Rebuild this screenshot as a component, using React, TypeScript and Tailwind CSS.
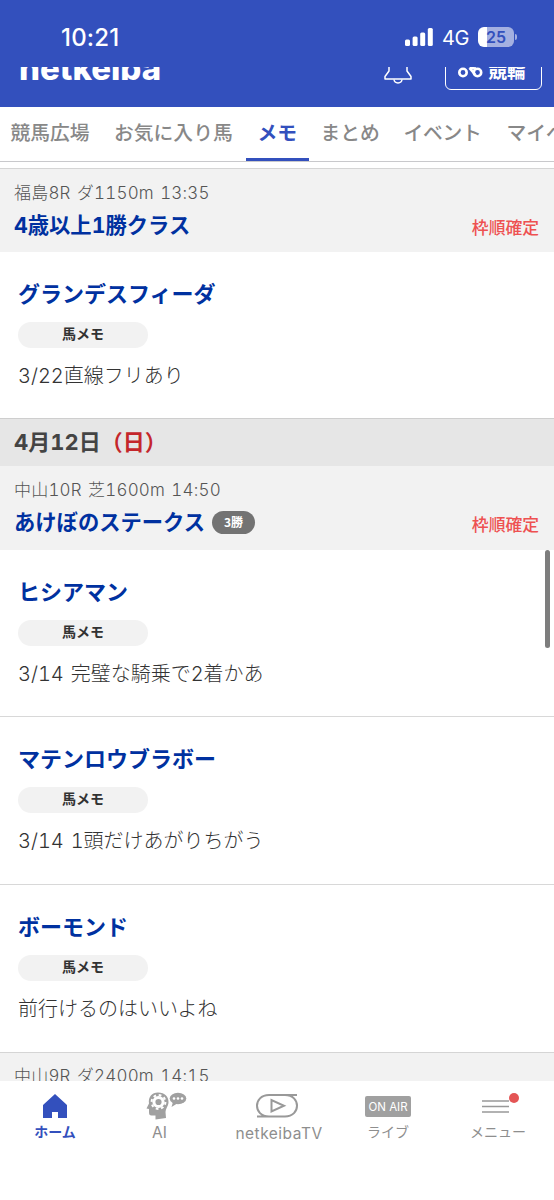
import { ReactNode } from 'react';
import clsx from 'clsx';

interface Horse {
  name: string;
  memo: string;
}

interface HorseMemoProps extends Horse {
  className?: string;
}

interface RaceHeaderProps {
  info: string;
  title: string;
  grade?: string;
  className?: string;
}

interface NavItemProps {
  label: string;
  icon: ReactNode;
  className: string;
  labelSize?: string;
  active?: boolean;
}

const tabs = [
  { label: '競馬広場', width: 'w-[104px] pl-[10.5px]' },
  { label: 'お気に入り馬', width: 'w-[141.5px] pl-[10px]' },
  { label: 'メモ', width: 'w-[63px] pl-[12px]', active: true },
  { label: 'まとめ', width: 'w-[84px] pl-[12px]' },
  { label: 'イベント', width: 'w-[102px] pl-[11px] tracking-[-0.3px]' },
  { label: 'マイページ', width: 'w-[120px] pl-[12px]' },
];

const horses: Horse[] = [
  { name: 'ヒシアマン', memo: '3/14 完璧な騎乗で2着かあ' },
  { name: 'マテンロウブラボー', memo: '3/14 1頭だけあがりちがう' },
  { name: 'ボーモンド', memo: '前行けるのはいいよね' },
];

const StatusBar = () => (
  <div className="flex h-[67px] items-start justify-between pr-[37px] pl-[61px] pt-[23px] font-['Inter',sans-serif] text-white">
    <span className="text-[24px] leading-[29px] font-medium tracking-[0.2px]">
      10:21
    </span>
    <div className="flex h-[28px] items-center">
      <svg className="mr-[9px]" width="28" height="18" viewBox="0 0 28 18" fill="#fff">
        <rect x="0" y="11.5" width="5" height="6.5" rx="1.5" />
        <rect x="7.6" y="8.5" width="5" height="9.5" rx="1.5" />
        <rect x="15.2" y="4.5" width="5" height="13.5" rx="1.5" />
        <rect x="22.8" y="0" width="5" height="18" rx="1.5" />
      </svg>
      <span className="mr-[9px] w-[27px] pt-[1px] text-[20px] leading-[28px] tracking-[-0.3px] whitespace-nowrap">
        4G
      </span>
      <div className="flex h-[20px] w-[36px] items-center justify-center rounded-[6px] bg-[linear-gradient(90deg,#fff_9px,#a4b0e1_9px)] text-[16px] font-semibold text-[#3350bd]">
        25
      </div>
      <span className="ml-[1px] h-[6px] w-[2px] rounded-r-full bg-[#a4b0e1]" />
    </div>
  </div>
);

const SiteHeader = () => (
  <div className="flex h-[40px] items-end overflow-hidden text-white">
    <div className="mb-[18px] ml-[19px] h-[40px] w-[144px]">
      <span className="inline-block origin-left scale-x-[1.03] font-['Inter',sans-serif] text-[32px] leading-[40px] font-extrabold">
        netkeiba
      </span>
    </div>
    <svg className="mb-[23px] ml-[221px]" width="28" height="34" viewBox="0 0 28 34" fill="none" stroke="#fff" strokeWidth="1.5">
      <path d="M5 12C5 2 23 2 23 12V21L27 26.500V29H1V26.500L5 21Z" strokeLinejoin="round" />
      <path d="M10 29.500C10.500 34 17.500 34 18 29.500" />
    </svg>
    <div className="mb-[17px] ml-[32.5px] flex h-[44px] w-[97px] items-end rounded-[6px] border-[1.5px] border-white pb-[9px] pl-[12px]">
      <svg className="mb-[2px] shrink-0" width="25" height="14" viewBox="0 0 25 14" fill="none" stroke="#fff" strokeWidth="2.6">
        <circle cx="5" cy="8.500" r="3.700" />
        <circle cx="19.500" cy="8.500" r="3.700" />
        <path d="M11.500 4L17 10.500M11.500 4L18 4.500" />
      </svg>
      <span className="ml-[6px] text-[18.5px] leading-[20px] font-bold whitespace-nowrap">競輪</span>
    </div>
  </div>
);

const TabBar = () => (
  <nav className="flex h-[55px] overflow-hidden border-b border-[#c9c9cc]">
    {tabs.map(({ label, width, active }) => (
      <div
        key={label}
        className={clsx(
          'shrink-0 pt-[11px] text-[19.8px] leading-[28px] whitespace-nowrap',
          width,
          active
            ? 'border-b-[3px] border-[#3350bd] font-bold text-[#3350bd]'
            : 'font-medium text-[#888]',
        )}
      >
        {label}
      </div>
    ))}
  </nav>
);

const RaceHeader = ({ info, title, grade, className }: RaceHeaderProps) => (
  <div className={clsx('h-[84px] bg-[#f2f2f2] pr-[15px] pl-[14px]', className)}>
    <p className="font-['Inter','Noto_Sans_CJK_JP',sans-serif] text-[17px] leading-[24px] font-light tracking-[0.2px] text-[#555] tabular-nums [word-spacing:1.5px]">
      {info}
    </p>
    <div className="flex items-center pt-[5px]">
      <h3 className="font-['Inter','Noto_Sans_CJK_JP',sans-serif] text-[21.3px] leading-[30px] font-bold text-[#0031a0] tabular-nums">
        {title}
      </h3>
      {grade && (
        <span className="ml-[7px] h-[23px] w-[43px] rounded-full bg-[#737373] text-center text-[12px] leading-[21px] font-bold text-white">
          {grade}
        </span>
      )}
      <span className="mt-[4px] ml-auto text-[16.8px] leading-[24px] font-medium text-[#ee5151]">
        枠順確定
      </span>
    </div>
  </div>
);

const HorseMemo = ({ name, memo, className }: HorseMemoProps) => (
  <article className={clsx('pt-[24px] pl-[18px]', className)}>
    <h4 className="text-[22px] leading-[32px] font-bold text-[#0031a0]">{name}</h4>
    <div className="mt-[14px] h-[26px] w-[130px] rounded-full bg-[#f2f2f2] text-center text-[14px] leading-[23px] font-bold text-[#333]">
      馬メモ
    </div>
    <p className="mt-[13px] font-['Inter','Noto_Sans_CJK_JP',sans-serif] text-[20px] leading-[30px] font-light text-[#333] tabular-nums [word-spacing:1.5px]">
      {memo}
    </p>
  </article>
);

const NavItem = ({ label, icon, className, labelSize = 'text-[14px]', active }: NavItemProps) => (
  <div
    className={clsx(
      'flex shrink-0 flex-col items-center pt-[10px]',
      active ? 'font-bold text-[#3350bd]' : 'text-[#8e8e8e]',
      className,
    )}
  >
    <div className="flex h-[30px] items-center justify-center">{icon}</div>
    <span
      className={clsx(
        "font-['Inter','Noto_Sans_CJK_JP',sans-serif] leading-[22px] whitespace-nowrap",
        labelSize,
      )}
    >
      {label}
    </span>
  </div>
);

const HomeIcon = () => (
  <svg width="26" height="26" viewBox="0 0 26 26" fill="currentColor">
    <path d="M13 1L25 12V25H16V19H10V25H1V12Z" />
  </svg>
);

const AiIcon = () => (
  <svg className="ml-[12px] shrink-0" width="42" height="28" viewBox="0 0 42 28">
    <path
      d="M13 .5C20 .5 24 5 23.500 11C23.200 14 20.500 17 20.500 20L21 26L10.500 27.500V23.500H6.500C4.500 23.500 4 22.500 4 20V17L1.500 16.500L4 11.500C3 5 7 .5 13 .5Z"
      fill="#a0a0a0"
    />
    <circle cx="13.500" cy="10" r="4.600" fill="none" stroke="#fff" strokeWidth="3" />
    <circle cx="13.500" cy="10" r="6.900" fill="none" stroke="#fff" strokeWidth="2" strokeDasharray="2.710 2.710" />
    <ellipse cx="33" cy="6.500" rx="8.300" ry="5.700" fill="#a0a0a0" />
    <path d="M28 10L26.500 15L33 11Z" fill="#a0a0a0" />
    <g fill="#fff">
      <circle cx="29" cy="6.500" r="1.300" />
      <circle cx="33" cy="6.500" r="1.300" />
      <circle cx="37" cy="6.500" r="1.300" />
    </g>
  </svg>
);

const TvIcon = () => (
  <svg className="mr-[4px]" width="42" height="26" viewBox="0 0 42 26" fill="none" stroke="#999" strokeWidth="2">
    <path d="M41 2H13C-3 2 -3 23.500 13 23.500M1 23.500H29C45 23.500 45 2 29 2" />
    <path d="M15.500 7V18.500L28 12.750Z" />
  </svg>
);

const MenuIcon = () => (
  <div className="relative mr-[4px]">
    <svg width="28" height="16" viewBox="0 0 28 16" stroke="#999" strokeWidth="1.700">
      <path d="M0 3H27M0 8.500H27M0 14H27" />
    </svg>
    <span className="absolute -top-[5.5px] left-[26.5px] h-[10px] w-[10px] rounded-full bg-[#e45555]" />
  </div>
);

const BottomNav = () => (
  <nav className="flex h-[119px] overflow-hidden bg-white">
    <NavItem active label="ホーム" icon={<HomeIcon />} className="w-[110px]" />
    <NavItem
      label="AI"
      icon={<AiIcon />}
      labelSize="pt-[1px] text-[15.5px]"
      className="w-[99px]"
    />
    <NavItem
      label="netkeibaTV"
      icon={<TvIcon />}
      labelSize="pt-[2px] text-[15.5px] tracking-[0.5px]"
      className="w-[140px]"
    />
    <NavItem
      label="ライブ"
      icon={
        <span className="h-[21px] w-[46px] rounded-[2px] bg-[#a0a0a0] text-center font-['Inter',sans-serif] text-[11.5px] leading-[22px] whitespace-nowrap text-white">
          ON AIR
        </span>
      }
      className="w-[78px]"
    />
    <NavItem label="メニュー" icon={<MenuIcon />} className="w-[142px]" />
  </nav>
);

export default function App() {
  return (
    <div className="relative flex h-[1200px] w-[554px] flex-col overflow-hidden bg-white font-['Noto_Sans_CJK_JP',sans-serif]">
      <header className="h-[107px] shrink-0 bg-[#3350bd]">
        <StatusBar />
        <SiteHeader />
      </header>
      <TabBar />
      <main className="mt-[6px] h-[913px] overflow-hidden">
        <RaceHeader
          info="福島8R ダ1150m 13:35"
          title="4歳以上1勝クラス"
          className="border-t border-[#d5d5d5] pt-[12px]"
        />
        <HorseMemo
          name="グランデスフィーダ"
          memo="3/22直線フリあり"
          className="h-[166px]"
        />
        <h2 className="h-[48px] border-t border-[#cecece] bg-[#e6e6e6] pl-[14px] font-['Inter','Noto_Sans_CJK_JP',sans-serif] text-[22px] leading-[46px] font-bold text-[#444] tabular-nums">
          4月12日<span className="text-[#c4262b]">（日）</span>
        </h2>
        <RaceHeader
          info="中山10R 芝1600m 14:50"
          title="あけぼのステークス"
          grade="3勝"
          className="pt-[12px]"
        />
        <div className="divide-y divide-[#d8d8d8]">
          {horses.map((horse) => (
            <HorseMemo key={horse.name} {...horse} className="h-[167.300px]" />
          ))}
        </div>
        <RaceHeader
          info="中山9R ダ2400m 14:15"
          title="4歳以上2勝クラス"
          className="border-t border-[#d5d5d5] pt-[11px]"
        />
      </main>
      <BottomNav />
      <div className="absolute top-[550px] right-[4px] h-[98px] w-[5px] rounded-full bg-[#7d7d7d]" />
    </div>
  );
}
